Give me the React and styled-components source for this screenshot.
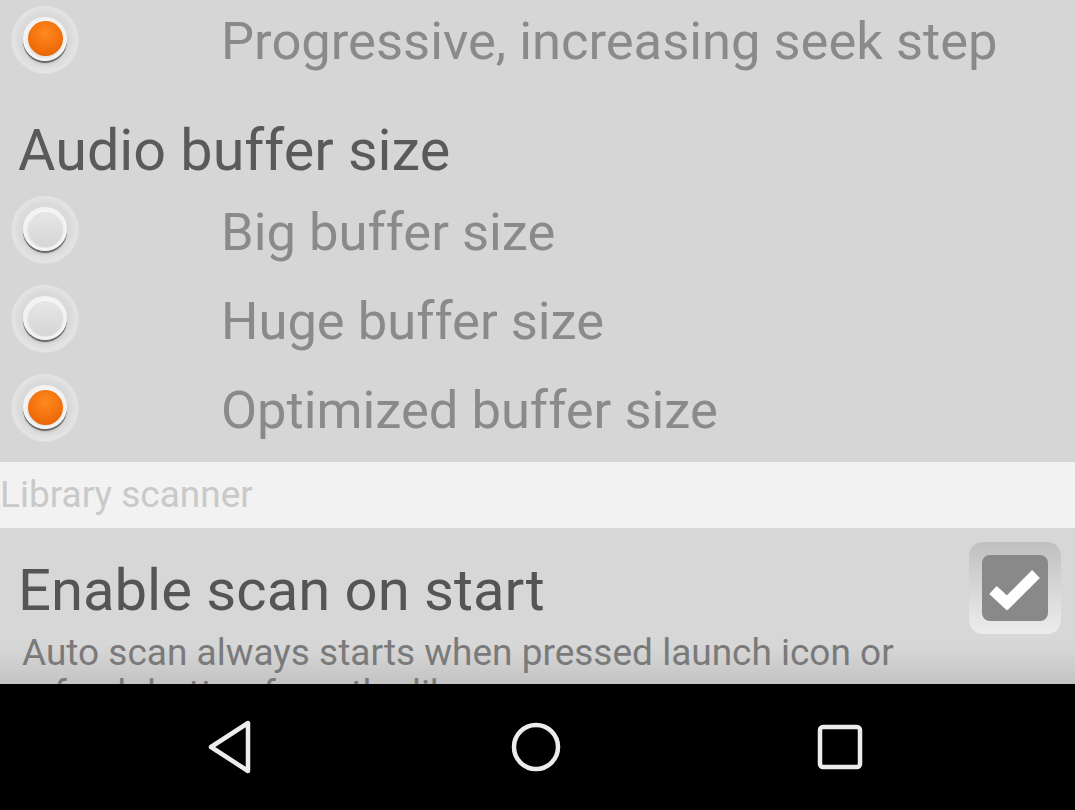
import React from 'react';
import styled, { createGlobalStyle } from 'styled-components';

const GlobalStyle = createGlobalStyle`
  html, body {
    margin: 0;
    padding: 0;
    background: #000;
  }
  body {
    font-family: Roboto, "Noto Sans", "Liberation Sans", sans-serif;
  }
`;

const Screen = styled.div`
  width: 1075px;
  height: 810px;
  display: flex;
  flex-direction: column;
  overflow: hidden;
`;

const List = styled.div`
  flex: 1;
  display: flex;
  flex-direction: column;
  background: #d6d6d6;
  overflow: hidden;
`;

const OptionRow = styled.div`
  height: 89px;
  flex: 0 0 89px;
  display: flex;
  align-items: center;
  margin-top: ${p => p.$offset || 0}px;
`;

const RadioWrap = styled.div`
  width: 66px;
  height: 66px;
  margin-left: 12px;
  border-radius: 50%;
  display: flex;
  align-items: center;
  justify-content: center;
  background: radial-gradient(circle, #dadada 55%, #e6e6e6 72%, #d9d9d9 100%);
  box-shadow: 0 1px 2px rgba(255, 255, 255, 0.6);
`;

const RadioRing = styled.div`
  width: 44px;
  height: 44px;
  border-radius: 50%;
  box-sizing: border-box;
  display: flex;
  align-items: center;
  justify-content: center;
  background: linear-gradient(#f6f6f6, #e4e4e4);
  border: 3px solid #f3f3f3;
  box-shadow: 0 2px 0 #6a6a6a, 0 3px 2px rgba(0, 0, 0, 0.15);
`;

const RadioDot = styled.div`
  width: 35px;
  height: 35px;
  border-radius: 50%;
  background: ${p =>
    p.$checked
      ? 'radial-gradient(circle at 50% 35%, #ff8a1e, #ee6a0a 70%, #d85a06)'
      : 'linear-gradient(#e6e6e6, #d6d6d6)'};
`;

const OptionLabel = styled.span`
  margin-left: 143px;
  padding-top: 6px;
  font-size: 52.5px;
  line-height: 1;
  color: #8a8a8a;
  white-space: nowrap;
`;

const GroupTitle = styled.div`
  flex: 0 0 auto;
  padding: 39px 0 5px 18px;
  font-size: 57.5px;
  line-height: 1;
  color: #5a5a5a;
  white-space: nowrap;
`;

const Category = styled.div`
  flex: 0 0 66px;
  margin-top: 10px;
  display: flex;
  align-items: center;
  background: #f2f2f2;
  font-size: 37px;
  color: #c9c9c9;
  white-space: nowrap;
`;

const PrefRow = styled.div`
  flex: 1;
  display: flex;
  justify-content: space-between;
  align-items: flex-start;
  overflow: hidden;
  background: linear-gradient(#d7d7d7 0%, #d7d7d7 75%, #c4c4c4 100%);
`;

const PrefText = styled.div`
  padding-top: 33px;
  display: flex;
  flex-direction: column;
`;

const PrefTitle = styled.div`
  padding-left: 18px;
  font-size: 58px;
  line-height: 1;
  color: #555;
  white-space: nowrap;
`;

const PrefSummary = styled.div`
  margin-top: 13px;
  padding-left: 22px;
  width: 900px;
  font-size: 37px;
  line-height: 41px;
  color: #7a7a7a;
`;

const CheckOuter = styled.div`
  width: 92px;
  height: 92px;
  margin: 14px 14px 0 0;
  border-radius: 14px;
  display: flex;
  align-items: center;
  justify-content: center;
  background: linear-gradient(#bfbfbf, #e0e0e0 70%, #ececec);
`;

const CheckInner = styled.div`
  width: 66px;
  height: 66px;
  border-radius: 8px;
  display: flex;
  align-items: center;
  justify-content: center;
  background: #898989;
`;

const NavBar = styled.div`
  flex: 0 0 126px;
  background: #000;
  display: flex;
  align-items: center;
  justify-content: center;
  gap: 204px;
  padding-right: 4px;
`;

const NavButton = styled.div`
  width: 100px;
  height: 60px;
  display: flex;
  align-items: center;
  justify-content: center;
`;

const Radio = ({ checked }) => (
  <RadioWrap>
    <RadioRing>
      <RadioDot $checked={checked} />
    </RadioRing>
  </RadioWrap>
);

const Option = ({ label, checked, offset }) => (
  <OptionRow $offset={offset}>
    <Radio checked={checked} />
    <OptionLabel>{label}</OptionLabel>
  </OptionRow>
);

export default function App() {
  return (
    <>
      <GlobalStyle />
      <Screen>
        <List>
          <Option label="Progressive, increasing seek step" checked offset={-6} />
          <GroupTitle>Audio buffer size</GroupTitle>
          <Option label="Big buffer size" />
          <Option label="Huge buffer size" />
          <Option label="Optimized buffer size" checked />
          <Category>Library scanner</Category>
          <PrefRow>
            <PrefText>
              <PrefTitle>Enable scan on start</PrefTitle>
              <PrefSummary>
                Auto scan always starts when pressed launch icon or
                refresh button from the library screen
              </PrefSummary>
            </PrefText>
            <CheckOuter>
              <CheckInner>
                <svg width="54" height="44" viewBox="0 0 54 44">
                  <path
                    d="M5 24 L19 37 L48 8"
                    fill="none"
                    stroke="#fff"
                    strokeWidth="11"
                    strokeLinejoin="miter"
                  />
                </svg>
              </CheckInner>
            </CheckOuter>
          </PrefRow>
        </List>
        <NavBar>
          <NavButton>
            <svg width="50" height="56" viewBox="0 0 50 56">
              <path
                d="M41 4 L41 52 L4 28 Z"
                fill="none"
                stroke="#ececec"
                strokeWidth="4.5"
                strokeLinejoin="round"
              />
            </svg>
          </NavButton>
          <NavButton>
            <svg width="52" height="52" viewBox="0 0 52 52">
              <circle cx="26" cy="26" r="22" fill="none" stroke="#ececec" strokeWidth="4.5" />
            </svg>
          </NavButton>
          <NavButton>
            <svg width="48" height="48" viewBox="0 0 48 48">
              <rect x="4" y="4" width="40" height="40" rx="3" fill="none" stroke="#ececec" strokeWidth="4.5" />
            </svg>
          </NavButton>
        </NavBar>
      </Screen>
    </>
  );
}
